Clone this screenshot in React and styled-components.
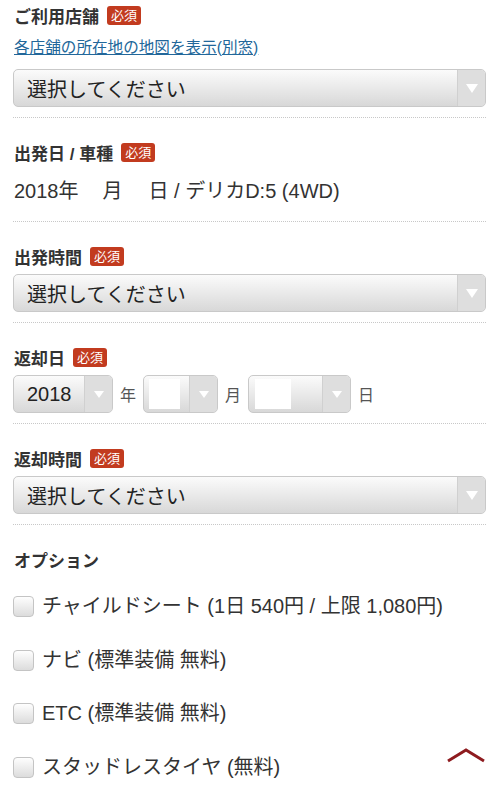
import React from "react";
import styled, { createGlobalStyle } from "styled-components";

const Global = createGlobalStyle`
  html, body { margin: 0; padding: 0; background: #fff; }
  body { font-family: "Liberation Sans", "Noto Sans CJK JP", sans-serif; color: #333; }
`;

const Page = styled.div`
  padding: 0 14px 0 13px;
`;

const Section = styled.section`
  padding: ${(p) => (p.$first ? "4px" : "23px")} 0 ${(p) => p.$pb || 10}px;
  border-bottom: ${(p) => (p.$noLine ? "none" : "1px dotted #c8c8c8")};
`;

const LabelRow = styled.div`
  display: flex;
  align-items: center;
  height: 22px;
  gap: 8px;
  margin-bottom: ${(p) => p.$mb ?? 7}px;
`;

const Label = styled.span`
  font-size: 17px;
  font-weight: bold;
  color: #333;
  padding-left: 1px;
`;

const Badge = styled.span`
  display: inline-flex;
  align-items: center;
  justify-content: center;
  height: 19px;
  padding: 0 4px;
  background: #c23b1f;
  color: #fff;
  font-size: 13px;
  border-radius: 3px;
  line-height: 1;
`;

const MapLink = styled.a`
  display: block;
  font-size: 15.6px;
  line-height: 20px;
  color: #22679a;
  text-decoration: underline;
  margin: 12px 0 11px 1px;
`;

const SelectBox = styled.div`
  display: flex;
  align-items: stretch;
  height: 38px;
  width: ${(p) => (p.$w ? `${p.$w}px` : "100%")};
  box-sizing: border-box;
  border: 1px solid #c9c9c9;
  border-radius: 5px;
  background: linear-gradient(#fbfbfb, #d8d8d8);
  overflow: hidden;
  flex: none;
`;

const SelectValue = styled.div`
  flex: 1;
  display: flex;
  align-items: center;
  padding-left: ${(p) => p.$pl ?? 13}px;
  font-size: 20px;
  color: #222;
`;

const Blank = styled.div`
  width: ${(p) => p.$w}px;
  height: 30px;
  margin-left: ${(p) => p.$ml}px;
  background: #fff;
`;

const ArrowCell = styled.div`
  width: 27px;
  flex: none;
  display: flex;
  align-items: center;
  justify-content: center;
  background: #dedede;
  border-left: 1px solid #d0d0d0;
  &::after {
    content: "";
    border-left: ${(p) => (p.$small ? 5 : 6)}px solid transparent;
    border-right: ${(p) => (p.$small ? 5 : 6)}px solid transparent;
    border-top: ${(p) => (p.$small ? 7 : 9)}px solid #fff;
  }
`;

const DateText = styled.div`
  font-size: 20px;
  line-height: 30px;
  color: #333;
  margin-top: 13px;
  padding-left: 1px;
`;

const Gap = styled.span`
  display: inline-block;
  width: ${(p) => p.$w}px;
`;

const DateRow = styled.div`
  display: flex;
  align-items: center;
  gap: 7px;
`;

const Unit = styled.span`
  font-size: 16px;
  color: #555;
`;

const OptionList = styled.div`
  margin-top: 10px;
`;

const OptionRow = styled.label`
  display: flex;
  align-items: center;
  height: 53.5px;
  gap: 8px;
  font-size: 20px;
  color: #333;
`;

const Check = styled.span`
  width: 21px;
  height: 21px;
  box-sizing: border-box;
  border: 1px solid #c4c4c4;
  border-radius: 4px;
  background: linear-gradient(#fefefe, #dcdcdc);
  flex: none;
`;

const OptText = styled.span`
  margin-top: -4px;
`;

const TopButton = styled.button`
  position: fixed;
  right: 14px;
  bottom: 29px;
  width: 40px;
  height: 18px;
  padding: 0;
  border: none;
  background: transparent;
`;

function Select({ children }) {
  return (
    <SelectBox>
      <SelectValue>{children}</SelectValue>
      <ArrowCell />
    </SelectBox>
  );
}

const options = [
  "チャイルドシート (1日 540円 / 上限 1,080円)",
  "ナビ (標準装備 無料)",
  "ETC (標準装備 無料)",
  "スタッドレスタイヤ (無料)",
];

export default function App() {
  return (
    <Page>
      <Global />
      <Section $first>
        <LabelRow $mb={0}>
          <Label>ご利用店舗</Label>
          <Badge>必須</Badge>
        </LabelRow>
        <MapLink href="#">各店舗の所在地の地図を表示(別窓)</MapLink>
        <Select>選択してください</Select>
      </Section>

      <Section $pb={15}>
        <LabelRow $mb={0}>
          <Label>出発日 / 車種</Label>
          <Badge>必須</Badge>
        </LabelRow>
        <DateText>
          2018年<Gap $w={24} />月<Gap $w={26} />日 / デリカD:5 (4WD)
        </DateText>
      </Section>

      <Section>
        <LabelRow>
          <Label>出発時間</Label>
          <Badge>必須</Badge>
        </LabelRow>
        <Select>選択してください</Select>
      </Section>

      <Section>
        <LabelRow>
          <Label>返却日</Label>
          <Badge>必須</Badge>
        </LabelRow>
        <DateRow>
          <SelectBox $w={100}>
            <SelectValue>2018</SelectValue>
            <ArrowCell $small />
          </SelectBox>
          <Unit>年</Unit>
          <SelectBox $w={75}>
            <SelectValue $pl={0}>
              <Blank $w={31} $ml={5} />
            </SelectValue>
            <ArrowCell $small />
          </SelectBox>
          <Unit>月</Unit>
          <SelectBox $w={103}>
            <SelectValue $pl={0}>
              <Blank $w={36} $ml={6} />
            </SelectValue>
            <ArrowCell $small />
          </SelectBox>
          <Unit>日</Unit>
        </DateRow>
      </Section>

      <Section>
        <LabelRow>
          <Label>返却時間</Label>
          <Badge>必須</Badge>
        </LabelRow>
        <Select>選択してください</Select>
      </Section>

      <Section $noLine $pb={0}>
        <LabelRow $mb={0}>
          <Label>オプション</Label>
        </LabelRow>
        <OptionList>
          {options.map((o) => (
            <OptionRow key={o}>
              <Check />
              <OptText>{o}</OptText>
            </OptionRow>
          ))}
        </OptionList>
      </Section>

      <TopButton aria-label="ページトップへ">
        <svg width="40" height="18" viewBox="0 0 40 18">
          <polyline
            points="2,15 20,4 38,15"
            fill="none"
            stroke="#8e1b1f"
            strokeWidth="3"
          />
        </svg>
      </TopButton>
    </Page>
  );
}
